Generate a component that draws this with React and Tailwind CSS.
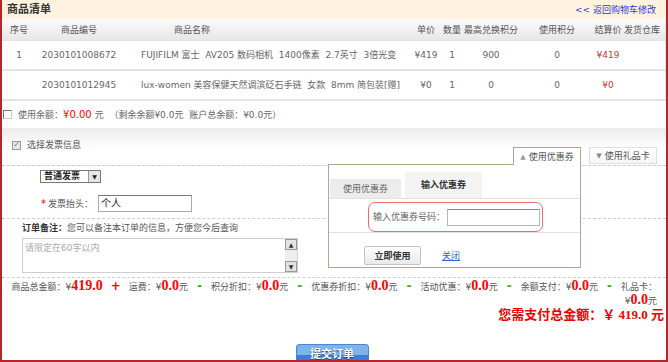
const items = [
  { no: '1', sku: '2030101008672', name: 'FUJIFILM 富士  AV205 数码相机  1400像素  2.7英寸  3倍光变', price: '¥419', qty: '1', max: '900', used: '0', total: '¥419' },
  { no: '', sku: '2030101012945', name: 'lux-women 美容保健天然调滨砭石手链  女款  8mm 简包装[赠]', price: '¥0', qty: '1', max: '0', used: '0', total: '¥0' },
];

const cols = 'grid grid-cols-[34px_86px_288px_32px_20px_58px_74px_28px_40px]';

const Num = ({ children }) => (
  <span className="font-['Liberation_Serif',serif] text-[14px] font-bold text-[#ff0000]">{children}</span>
);

const Minus = () => <span className="mx-[9px] text-[12px] font-bold text-[#44a322]">-</span>;

export default function App() {
  return (
    <div className="h-[362px] w-[668px] overflow-hidden border-x-2 border-b-2 border-[#b3262b] bg-white font-['DejaVu_Sans','Noto_Sans_CJK_SC',sans-serif] text-[9px] leading-[12px] text-[#666]">
      {/* title */}
      <div className="flex h-[19px] items-center justify-between bg-[#fdf3df] pl-[5px] pr-[10px]">
        <span className="text-[11px] font-bold text-[#333]">商品清单</span>
        <a href="#" className="text-[#3434e8]">&lt;&lt; 返回购物车修改</a>
      </div>

      {/* goods table */}
      <div className="border-r border-[#e6e6e6]">
        <div className={`${cols} h-[22px] items-center bg-linear-to-b from-[#fbfbfb] to-[#e6e6e6] text-[#555]`}>
          <span className="text-center">序号</span>
          <span className="text-center">商品编号</span>
          <span className="pl-[52px]">商品名称</span>
          <span className="text-center">单价</span>
          <span className="text-center">数量</span>
          <span className="text-center">最高兑换积分</span>
          <span className="text-center">使用积分</span>
          <span className="text-center">结算价</span>
          <span className="text-center">发货仓库</span>
        </div>
        {items.map((it) => (
          <div key={it.sku} className={`${cols} h-[30px] items-center border-b-2 border-[#e4e4e4] text-[#666]`}>
            <span className="text-center">{it.no}</span>
            <span className="text-center">{it.sku}</span>
            <span className="whitespace-pre pl-[19px]">{it.name}</span>
            <span className="text-center">{it.price}</span>
            <span className="text-center">{it.qty}</span>
            <span className="text-center">{it.max}</span>
            <span className="text-center">{it.used}</span>
            <span className="text-center text-[#c33]">{it.total}</span>
            <span></span>
          </div>
        ))}
      </div>

      {/* balance */}
      <div className="flex h-[27px] items-center pl-[1px] text-[#666]">
        <span className="mr-[6px] h-[9px] w-[9px] border border-[#777] border-r-[#ccc] border-b-[#ccc] bg-white"></span>
        <span>使用余额：</span>
        <span className="text-[10px] text-[#ff0000]">¥0.00</span>
        <span className="ml-[3px] whitespace-pre">元  （剩余余额¥0.0元  账户总余额：¥0.0元）</span>
      </div>

      {/* invoice header + coupon tabs */}
      <div className="flex h-[38px] items-end justify-between border-b border-dashed border-[#cfcfcf] bg-linear-to-b from-[#ececec] to-white to-60% pr-[9px]">
        <div className="mb-[14px] flex items-center pl-[10px] text-[#555]">
          <span className="mr-[6px] flex h-[9px] w-[9px] items-center justify-center border border-[#999] bg-[#e8e8e8] text-[8px] leading-none text-[#777]">✓</span>
          选择发票信息
        </div>
        <div className="flex gap-[8px]">
          <div className="relative">
            <div className="relative z-20 flex h-[18px] w-[68px] items-center justify-center gap-[3px] border border-b-0 border-[#b9a58c] bg-white text-[#555]">
              <span className="text-[7px] text-[#999]">▲</span>使用优惠券
            </div>
            <div className="absolute top-[17px] right-0 z-10 h-[104px] w-[253px] border border-[#b9a58c] bg-white">
              <div className="mt-[7px] flex h-[27px] items-end gap-[4px] border-b border-[#e2e2e2] pl-[1px]">
                <div className="flex h-[19px] w-[71px] items-center justify-center bg-[#ececec] text-[#666]">使用优惠券</div>
                <div className="flex h-[26px] w-[77px] items-center justify-center bg-[#f3f3f3] font-bold text-[#333]">输入优惠券</div>
              </div>
              <div className="flex h-[34px] items-end border-b border-[#e2e2e2] pl-[39px]">
                <div className="flex h-[30px] w-[175px] items-center rounded-[7px] border border-[#ef6b6b] pl-[4px] text-[#666]">
                  输入优惠券号码：
                  <span className="ml-[2px] h-[17px] w-[93px] border border-[#b5b5b5] border-t-[#8a8a8a] bg-white"></span>
                </div>
              </div>
              <div className="mt-[13px] flex items-center pl-[35px]">
                <span className="flex h-[19px] w-[57px] items-center justify-center rounded-[2px] border border-[#c4c4c4] bg-linear-to-b from-white to-[#e9e9e9] font-bold text-[#333]">立即使用</span>
                <a href="#" className="ml-[21px] text-[#3366cc] underline">关闭</a>
              </div>
            </div>
          </div>
          <div className="flex h-[17px] w-[68px] items-center justify-center gap-[3px] border border-[#e0e0e0] bg-linear-to-b from-white to-[#f6f6f6] text-[#555]">
            <span className="text-[7px] text-[#888]">▼</span>使用礼品卡
          </div>
        </div>
      </div>

      {/* invoice form */}
      <div className="flex flex-col border-b border-dashed border-[#cfcfcf] pb-[6px]">
        <div className="mt-[4px] ml-[38px] flex h-[13px] w-[61px] items-center border border-[#777] bg-white">
          <span className="flex-1 pl-[3px] text-[9px] leading-none font-bold text-[#222]">普通发票</span>
          <span className="flex h-full w-[12px] items-center justify-center border-l border-[#999] bg-[#e6e6e6] text-[6px] text-[#222]">▼</span>
        </div>
        <div className="mt-[12px] flex items-center">
          <span className="ml-[39px] text-[10px] text-[#e00]">*</span>
          <span className="ml-[2px] w-[46px] text-[#555]">发票抬头：</span>
          <span className="ml-[4px] flex h-[17px] w-[94px] items-center border border-[#aaa] border-t-[#777] bg-white pl-[2px] text-[10px] text-[#111]">个人</span>
        </div>
      </div>

      {/* order note */}
      <div className="border-b border-dashed border-[#cfcfcf] pt-[3px] pb-[4px] pl-[20px]">
        <div className="text-[#555]">
          <span className="font-bold text-[#333]">订单备注：</span>您可以备注本订单的信息，方便您今后查询
        </div>
        <div className="mt-[4px] flex h-[35px] w-[276px] border border-[#cfcfcf] bg-white">
          <span className="flex-1 pt-[3px] pl-[2px] text-[#aaa]">请限定在60字以内</span>
          <div className="flex w-[12px] flex-col justify-between bg-[#eeeeee]">
            <span className="flex h-[11px] items-center justify-center border border-[#999] bg-[#e3e3e3] text-[6px] text-[#333]">▲</span>
            <span className="flex h-[11px] items-center justify-center border border-[#999] bg-[#e3e3e3] text-[6px] text-[#333]">▼</span>
          </div>
        </div>
      </div>

      {/* summary */}
      <div className="pr-[9px] text-right text-[#555]">
        <div className="h-[15px] whitespace-nowrap leading-[15px]">
          商品总金额：¥<Num>419.0</Num>
          <span className="mx-[8px] text-[12px] font-bold text-[#ff0000]">+</span>
          运费：¥<Num>0.0</Num>元<Minus />
          积分折扣：¥<Num>0.0</Num>元<Minus />
          优惠券折扣：¥<Num>0.0</Num>元<Minus />
          活动优惠：¥<Num>0.0</Num>元<Minus />
          余额支付：¥<Num>0.0</Num>元<Minus />
          礼品卡：
        </div>
        <div className="h-[14px] leading-[14px]">
          ¥<Num>0.0</Num>元
        </div>
      </div>
      <div className="pr-[2px] text-right font-['Liberation_Serif','Noto_Sans_CJK_SC',serif] text-[13px] leading-[15px] font-bold text-[#ee0000]">
        您需支付总金额：￥ 419.0 元
      </div>

      {/* submit */}
      <div className="mt-[22px] flex justify-center pr-[4px]">
        <button className="h-[22px] w-[73px] rounded-t-[3px] border border-[#4a86d2] bg-linear-to-b from-[#7cb4ee] from-50% to-[#3a80d6] to-50% text-[11px] font-bold text-white [text-shadow:0_1px_1px_#245]">
          提交订单
        </button>
      </div>
    </div>
  );
}
